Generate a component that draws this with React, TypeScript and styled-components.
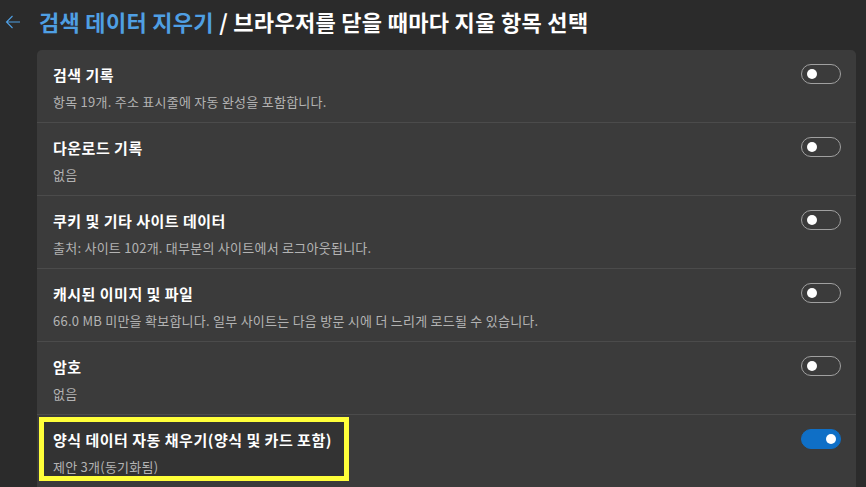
import React from 'react';
import styled, { createGlobalStyle } from 'styled-components';

const GlobalStyle = createGlobalStyle`
  html, body {
    margin: 0;
    padding: 0;
    background: #2b2b2b;
    font-family: "Noto Sans CJK KR", "Noto Sans", sans-serif;
    overflow: hidden;
  }
`;

const Page = styled.div`
  width: 866px;
  height: 487px;
  background: #2b2b2b;
  display: flex;
  flex-direction: column;
  overflow: hidden;
`;

const Header = styled.header`
  display: flex;
  align-items: center;
  height: 42px;
  padding: 2px 0 0 5px;
  gap: 18px;
  box-sizing: border-box;
`;

const BackButton = styled.button`
  display: flex;
  align-items: center;
  justify-content: center;
  width: 16px;
  height: 18px;
  padding: 0;
  margin-top: 2px;
  background: none;
  border: none;
  color: #4f9fe3;
  cursor: pointer;
`;

const Title = styled.h1`
  margin: 0;
  font-size: 22px;
  line-height: 28px;
  font-weight: 700;
  color: #ffffff;
  letter-spacing: 0.3px;
  white-space: nowrap;
`;

const Crumb = styled.span`
  color: #4f9fe3;
`;

const Card = styled.section`
  margin: 10px 10px 0 37px;
  background: #3b3b3b;
  border-radius: 5px 5px 0 0;
  display: flex;
  flex-direction: column;
`;

const Row = styled.div`
  display: flex;
  align-items: flex-start;
  padding: 15px 15px 11px 16px;
  border-bottom: 1px solid #4b4b4b;

  &:last-child {
    border-bottom: none;
  }
`;

const TextBlock = styled.div<{ $highlight?: boolean }>`
  position: relative;
  flex: none;
  width: max-content;
  display: flex;
  flex-direction: column;
  gap: 8px;

  &::before {
    content: '';
    display: ${({ $highlight }) => ($highlight ? 'block' : 'none')};
    position: absolute;
    top: -13px;
    left: -14px;
    right: -17px;
    bottom: -5px;
    border: 5px solid #ffff3a;
    background: #333333;
    z-index: 0;
  }
`;

const ItemTitle = styled.div`
  position: relative;
  z-index: 1;
  font-size: 15px;
  line-height: 20px;
  font-weight: 700;
  letter-spacing: 0.5px;
  color: #ffffff;
  white-space: nowrap;
`;

const ItemDesc = styled.div`
  position: relative;
  z-index: 1;
  font-size: 13px;
  line-height: 18px;
  letter-spacing: 0.25px;
  color: #b3b3b3;
  white-space: nowrap;
`;

const Switch = styled.button<{ $on?: boolean }>`
  margin: -1px 0 0 auto;
  position: relative;
  width: 40px;
  height: 20px;
  padding: 0;
  box-sizing: border-box;
  border-radius: 10px;
  border: 1px solid ${({ $on }) => ($on ? '#0f6fc6' : '#a0a0a0')};
  background: ${({ $on }) => ($on ? '#0f6fc6' : 'transparent')};
  cursor: pointer;

  &::after {
    content: '';
    position: absolute;
    top: 4px;
    left: ${({ $on }) => ($on ? '24px' : '5px')};
    width: 10px;
    height: 10px;
    border-radius: 50%;
    background: #ffffff;
  }
`;

const items = [
  { title: '검색 기록', desc: '항목 19개. 주소 표시줄에 자동 완성을 포함합니다.', on: false },
  { title: '다운로드 기록', desc: '없음', on: false },
  { title: '쿠키 및 기타 사이트 데이터', desc: '출처: 사이트 102개. 대부분의 사이트에서 로그아웃됩니다.', on: false },
  {
    title: '캐시된 이미지 및 파일',
    desc: '66.0 MB 미만을 확보합니다. 일부 사이트는 다음 방문 시에 더 느리게 로드될 수 있습니다.',
    on: false,
  },
  { title: '암호', desc: '없음', on: false },
  { title: '양식 데이터 자동 채우기(양식 및 카드 포함)', desc: '제안 3개(동기화됨)', on: true, highlight: true },
];

const App: React.FC = () => {
  return (
    <Page>
      <GlobalStyle />
      <Header>
        <BackButton aria-label="뒤로">
          <svg width="16" height="16" viewBox="0 0 16 16" fill="none" stroke="currentColor" strokeWidth="1.1">
            <path d="M15 8H1.5M7.5 2L1.5 8l6 6" />
          </svg>
        </BackButton>
        <Title>
          <Crumb>검색 데이터 지우기</Crumb> / 브라우저를 닫을 때마다 지울 항목 선택
        </Title>
      </Header>
      <Card>
        {items.map((item) => (
          <Row key={item.title}>
            <TextBlock $highlight={item.highlight}>
              <ItemTitle>{item.title}</ItemTitle>
              <ItemDesc>{item.desc}</ItemDesc>
            </TextBlock>
            <Switch $on={item.on} aria-label={item.title} />
          </Row>
        ))}
      </Card>
    </Page>
  );
};

export default App;
